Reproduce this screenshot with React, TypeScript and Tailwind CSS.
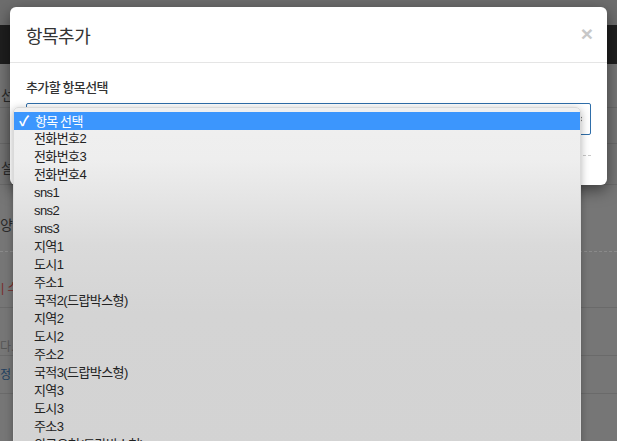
import React from "react";

const items = [
  "전화번호2",
  "전화번호3",
  "전화번호4",
  "sns1",
  "sns2",
  "sns3",
  "지역1",
  "도시1",
  "주소1",
  "국적2(드랍박스형)",
  "지역2",
  "도시2",
  "주소2",
  "국적3(드랍박스형)",
  "지역3",
  "도시3",
  "주소3",
  "외국유형(드랍박스형)",
];

export default function App() {
  return (
    <div className="relative w-[617px] h-[441px] overflow-hidden bg-[#767676] font-['Liberation_Sans','Noto_Sans_CJK_KR',sans-serif]">
      {/* dimmed page behind */}
      <div className="flex flex-col">
        <div className="h-[25px] bg-[#6d6d6d]" />
        <div className="h-[39px] bg-[#1f1f1f]" />
        <div className="flex flex-col text-[#2a2a2a] text-[14px] leading-none">
          <div className="h-[44px] border-b border-[#6a6a6a] flex items-center pl-[1px] pt-[18px]">선</div>
          <div className="h-[36px] border-b border-[#6a6a6a]" />
          <div className="h-[41px] border-b border-[#6a6a6a] flex items-center pl-[1px] pt-[8px]">설</div>
          <div className="h-[66px] flex items-center pt-[14px]">양식</div>
          <div className="h-[18px] border-t border-dashed border-[#8a8a8a]" />
          <div className="h-[38px] flex items-center text-[12px] text-[#7a2a2a] pl-[1px]">| 스</div>
          <div className="h-[48px] border-t border-[#6a6a6a] flex items-end text-[12px] text-[#555] pb-[2px]">다.</div>
          <div className="h-[38px] border-t border-[#6a6a6a] flex items-center text-[12px] text-[#1f3f5f]">정</div>
          <div className="h-[40px] border-t border-[#6a6a6a]" />
        </div>
      </div>

      {/* modal */}
      <div className="absolute left-[10px] top-[7px] w-[597px] h-[178px] bg-white rounded-[6px] shadow-[0_5px_15px_rgba(0,0,0,0.5)] flex flex-col">
        <div className="h-[56px] border-b border-[#e5e5e5] flex items-center justify-between pl-[16px] pr-[14px]">
          <div className="text-[18px] text-[#333] font-['Noto_Sans_CJK_KR',sans-serif] leading-none pt-[1px] tracking-[-0.5px]">항목추가</div>
          <div className="text-[#c8c8c8] text-[21px] font-bold leading-none font-['Liberation_Sans',sans-serif] -mt-[2px]">×</div>
        </div>
        <div className="flex flex-col px-[16px] pt-[16px]">
          <div className="text-[13px] font-medium text-[#333] leading-[16px] font-['Noto_Sans_CJK_KR',sans-serif] tracking-[-0.6px]">추가할 항목선택</div>
          <div className="mt-[8px] h-[32px] border border-[#2f6ea9] rounded-[2px] flex items-center justify-end pr-[8px]">
            <svg width="6" height="10" viewBox="0 0 6 10">
              <path d="M0.5 4 L3 1.5 L5.5 4" stroke="#444" strokeWidth="1.2" fill="none" />
              <path d="M0.5 6 L3 8.5 L5.5 6" stroke="#444" strokeWidth="1.2" fill="none" />
            </svg>
          </div>
          <div className="mt-[20px] border-t border-dashed border-[#c8c8c8]" />
        </div>
      </div>

      {/* native dropdown menu */}
      <div className="absolute left-[13px] top-[107px] w-[568px] h-[345px] rounded-t-[5px] border border-[#dadada] bg-[linear-gradient(to_bottom,#f0f0f0_0%,#eeeeee_15%,#dadada_40%,#d4d4d4_60%,#d3d3d3_100%)] shadow-[0_2px_8px_rgba(0,0,0,0.3)] pt-[4px] text-[13px] leading-[18px] text-[#222]">
        <div className="h-[18px] bg-[#3c96fd] text-white flex items-center">
          <span className="w-[21px] pl-[5px] text-[14px] font-bold">✓</span>
          <span className="font-['Noto_Sans_CJK_KR',sans-serif] tracking-[-0.6px]">항목 선택</span>
        </div>
        {items.map((t) => (
          <div key={t} className="h-[18px] flex items-center pl-[20px] font-['Liberation_Sans','Noto_Sans_CJK_KR',sans-serif] tracking-[-0.6px]">
            {t}
          </div>
        ))}
      </div>
    </div>
  );
}
